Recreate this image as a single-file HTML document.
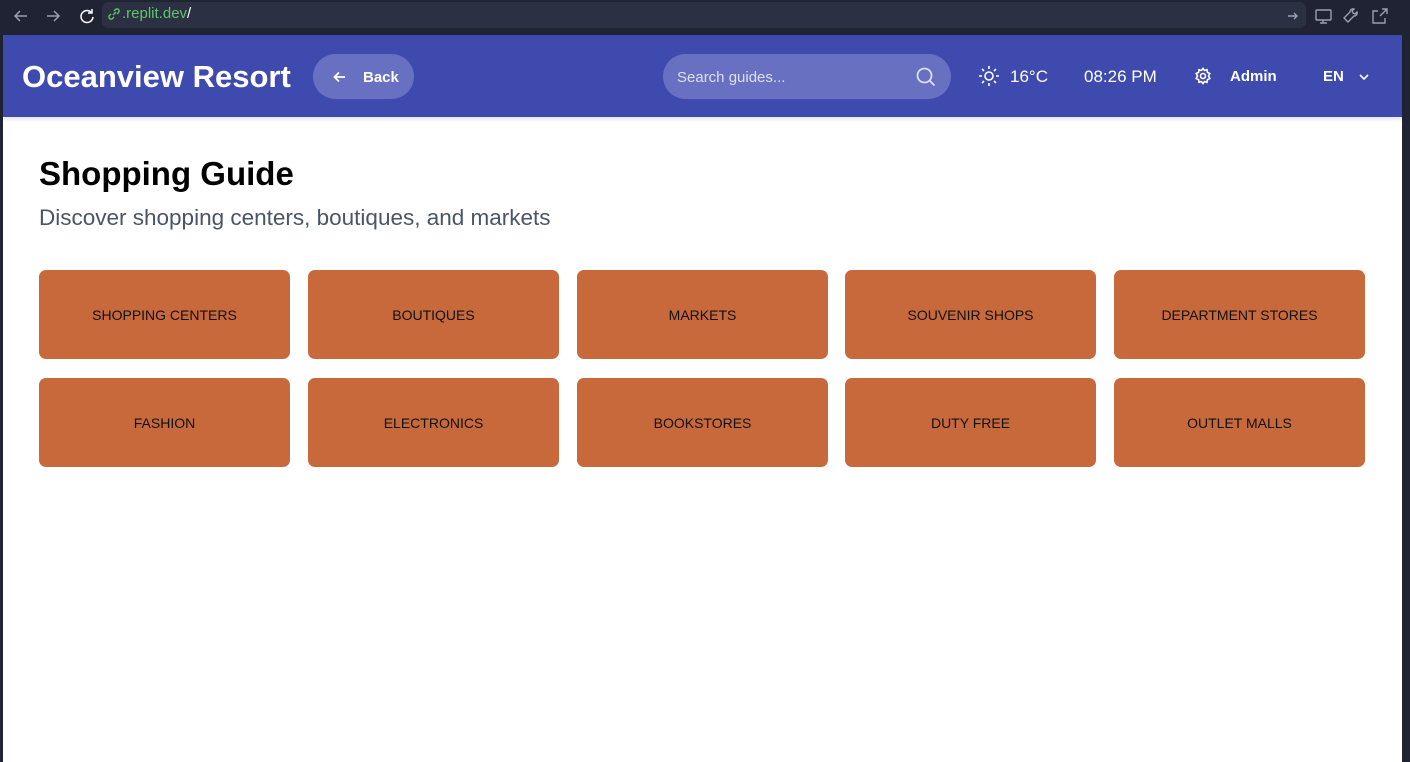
<!DOCTYPE html>
<html><head><meta charset="utf-8"><style>
*{box-sizing:border-box;margin:0;padding:0}
body{width:1410px;height:762px;overflow:hidden;background:#1f2333;font-family:"Liberation Sans",sans-serif;position:relative}
.chrome{position:absolute;left:0;top:0;width:1410px;height:35px;background:#1f2333}
.addr{position:absolute;left:102px;top:2px;width:1204px;height:26px;background:#2b3042;border-radius:6px}
.url{position:absolute;left:122px;top:5px;font-size:15px;color:#5fc66d}
.page{position:absolute;left:3px;top:35px;width:1399px;height:727px;background:#fff}
.hdr{position:absolute;left:0;top:0;width:1399px;height:82px;background:#3f4aaf;color:#fff;box-shadow:0 2px 4px rgba(0,0,0,.12)}
.title{position:absolute;left:19px;top:24px;font-size:31px;font-weight:bold}
.back{position:absolute;left:310px;top:19px;width:101px;height:45px;border-radius:23px;background:#6870c1;font-size:15px;font-weight:bold}
.search{position:absolute;left:660px;top:19px;width:288px;height:45px;border-radius:23px;background:#6870c1;font-size:15px;color:#dde0f5}
.t{position:absolute;font-size:17px}
.card{position:absolute;width:251px;height:89px;background:#c8693c;border-radius:7px;display:flex;align-items:center;justify-content:center;font-size:14px;color:#111}
</style></head><body>
<div class="chrome">
<svg style="position:absolute;left:12px;top:8px" width="90" height="16" fill="none" stroke="#9aa0ae" stroke-width="1.5"><path d="M3 8h12M8 3L3 8l5 5"/><path d="M35 8h12M42 3l5 5-5 5"/><path stroke="#fff" d="M79 4a6 6 0 1 0 2 5M80 1v4h-4"/></svg>
<div class="addr"></div>
<svg style="position:absolute;left:108px;top:8px" width="12" height="12" fill="none" stroke="#5fc66d" stroke-width="1.4"><path d="M5 7l3-3M3 6L1.5 7.5a2 2 0 0 0 3 3L6 9M6 3l1.5-1.5a2 2 0 0 1 3 3L9 6"/></svg>
<div class="url">.replit.dev<span style="color:#fff">/</span></div>
<svg style="position:absolute;left:1286px;top:8px" width="110" height="16" fill="none" stroke="#9aa0ae" stroke-width="1.4"><path d="M2 8h9M8 5l3 3-3 3"/><rect x="30" y="2" width="15" height="10" rx="1"/><path d="M37 12v3M34 15h7"/><path d="M62 14l6-6a3 3 0 0 0 3-4l-2 2-2-1-1-2 2-2a3 3 0 0 0-4 3l-6 6z"/><path d="M92 3h-5v12h12v-5M96 1h5v5M101 1l-7 7"/></svg>
</div>
<div class="page">
<div class="hdr">
<div class="title">Oceanview Resort</div>
<div class="back"><svg style="position:absolute;left:19px;top:15px" width="16" height="16" fill="none" stroke="#fff" stroke-width="1.8"><path d="M13 8H3M7 3.5L2.5 8 7 12.5"/></svg><span style="position:absolute;left:50px;top:15px">Back</span></div>
<div class="search"><span style="position:absolute;left:14px;top:15px">Search guides...</span><svg style="position:absolute;left:252px;top:12px" width="22" height="22" fill="none" stroke="#dde0f5" stroke-width="1.8"><circle cx="9.5" cy="9.5" r="7"/><path d="M14.5 14.5l5 5"/></svg></div>
<svg style="position:absolute;left:975px;top:30px" width="22" height="22" fill="none" stroke="#fff" stroke-width="1.6"><circle cx="11" cy="11" r="4"/><path d="M11 1v3M11 18v3M1 11h3M18 11h3M4 4l2 2M16 16l2 2M4 18l2-2M16 6l2-2"/></svg>
<div class="t" style="left:1007px;top:32px">16°C</div>
<div class="t" style="left:1081px;top:32px">08:26 PM</div>
<svg style="position:absolute;left:1191px;top:32px" width="18" height="18" fill="none" stroke="#fff" stroke-width="1.6"><circle cx="9" cy="9" r="2.5"/><path d="M9 1.5l1.5 2 2.5-.8.4 2.6 2.4 1.2-1.3 2.5 1.3 2.5-2.4 1.2-.4 2.6-2.5-.8L9 16.5l-1.5-2-2.5.8-.4-2.6-2.4-1.2L3.5 9 2.2 6.5l2.4-1.2.4-2.6 2.5.8z"/></svg>
<div class="t" style="left:1227px;top:33px;font-size:15px;font-weight:bold">Admin</div>
<div class="t" style="left:1320px;top:33px;font-size:15px;font-weight:bold">EN</div>
<svg style="position:absolute;left:1355px;top:37px" width="12" height="10" fill="none" stroke="#fff" stroke-width="1.6"><path d="M2 3l4 4 4-4"/></svg>
</div>
<div style="position:absolute;left:36px;top:120px;font-size:33px;font-weight:bold;color:#000">Shopping Guide</div>
<div style="position:absolute;left:36px;top:170px;font-size:22.5px;color:#4b5563">Discover shopping centers, boutiques, and markets</div>
<div class="card" style="left:36px;top:235px">SHOPPING CENTERS</div>
<div class="card" style="left:305px;top:235px">BOUTIQUES</div>
<div class="card" style="left:574px;top:235px">MARKETS</div>
<div class="card" style="left:842px;top:235px">SOUVENIR SHOPS</div>
<div class="card" style="left:1111px;top:235px">DEPARTMENT STORES</div>
<div class="card" style="left:36px;top:343px">FASHION</div>
<div class="card" style="left:305px;top:343px">ELECTRONICS</div>
<div class="card" style="left:574px;top:343px">BOOKSTORES</div>
<div class="card" style="left:842px;top:343px">DUTY FREE</div>
<div class="card" style="left:1111px;top:343px">OUTLET MALLS</div>
</div>
</body></html>
